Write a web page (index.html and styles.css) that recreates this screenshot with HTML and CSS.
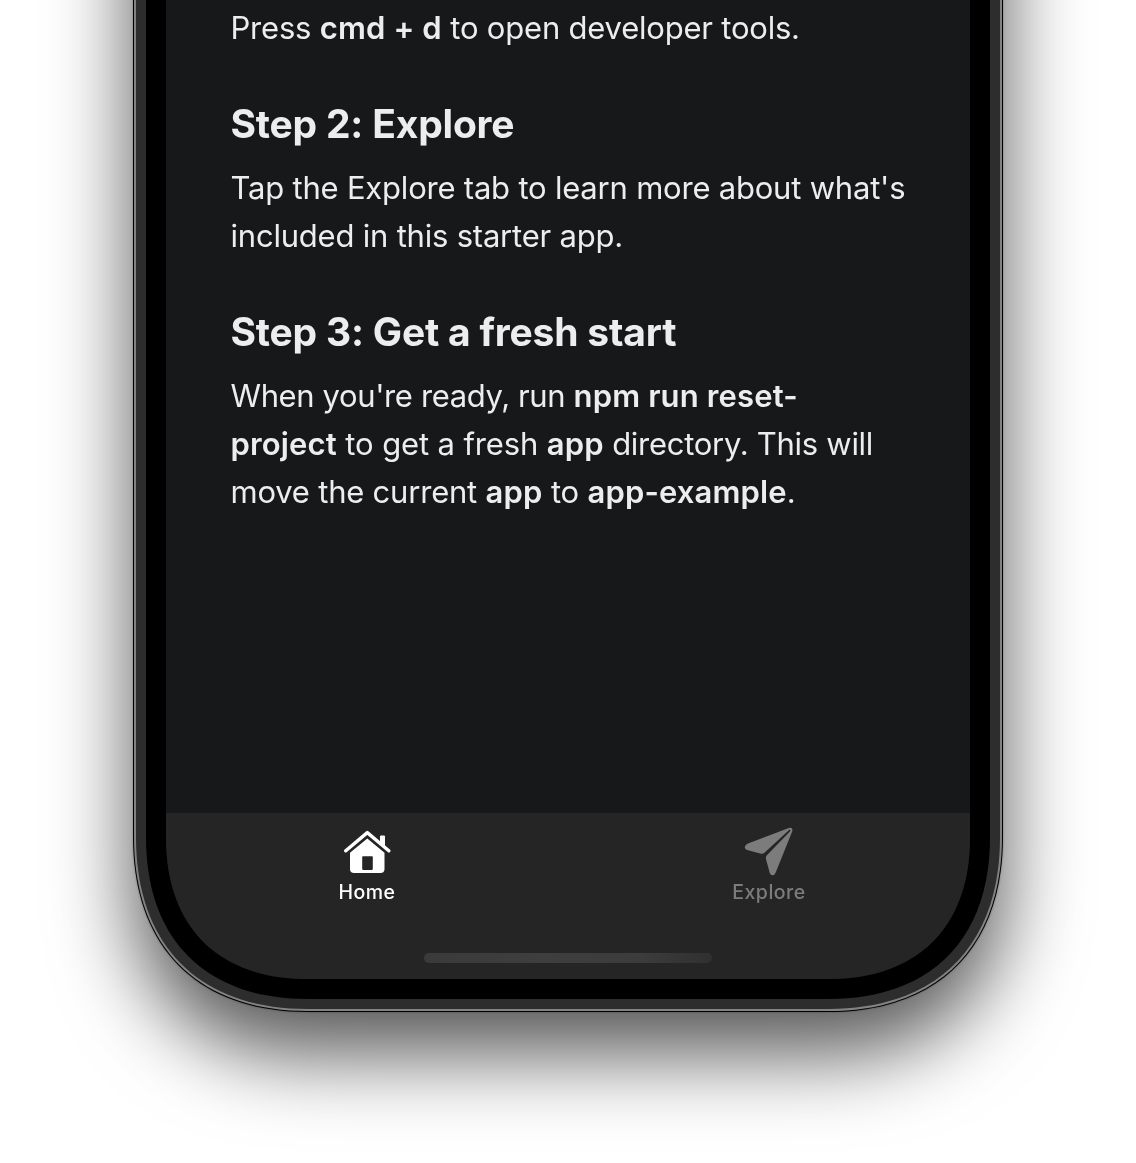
FILE: index.html
```html
<!DOCTYPE html>
<html lang="en">
<head>
<meta charset="utf-8">
<title>Starter app</title>
<link rel="stylesheet" href="styles.css">
</head>
<body>
<div class="phone">
  <div class="outline">
    <div class="highlight">
      <div class="rim">
        <div class="bezel">
          <div class="screen">
            <main class="content">
              <section class="step">
                <p class="text">Press <b>cmd + d</b> to open developer tools.</p>
              </section>
              <section class="step">
                <h2 class="title">Step 2: Explore</h2>
                <p class="text">Tap the Explore tab to learn more about what's<br>included in this starter app.</p>
              </section>
              <section class="step">
                <h2 class="title">Step 3: Get a fresh start</h2>
                <p class="text"><span class="tight">When you're ready, run </span><b>npm run reset-</b><br><b>project</b><span class="loose"> to get a fresh </span><b>app</b><span class="snug"> directory. This will</span><br>move the current <b>app</b> to <b>app-example</b>.</p>
              </section>
            </main>
            <nav class="tabs">
              <div class="tab-row">
                <a class="tab active">
                  <svg class="icon" viewBox="0 0 50 50" width="50" height="50">
                    <path d="M3.8 23.8 25.3 5.6 46.8 23.8" fill="none" stroke="currentColor" stroke-width="3.4" stroke-linecap="round" stroke-linejoin="round"/>
                    <path d="M38 16V9.4q0-1 1-1h3q1 0 1 1v10.8z" fill="currentColor"/>
                    <path fill-rule="evenodd" d="M25.3 11.4 42.5 25.8V42q0 4-4 4H12q-4 0-4-4V25.8zM21 29.3q-.8 0-.8.8v12q0 .8.8.8h9q.8 0 .8-.8v-12q0-.8-.8-.8z" fill="currentColor"/>
                  </svg>
                  <span class="label">Home</span>
                </a>
                <a class="tab">
                  <svg class="icon" viewBox="0 0 50 50" width="50" height="50">
                    <path d="M44.8.9Q49.3-.3 48.2 4.4L31.8 45.2Q30.6 48.3 28.6 48.3 26.3 48.2 25.5 45L22 32.3Q21.4 29.8 22.9 28.3L46.4 3.9Q46.8 2.4 45.4 2.7L20.7 25.5Q19 27.2 17 26.7L4 23.2Q.6 22.2.8 19.9 1 17.7 4 16.6z" fill="currentColor"/>
                  </svg>
                  <span class="label">Explore</span>
                </a>
              </div>
              <div class="home-indicator"></div>
            </nav>
          </div>
        </div>
      </div>
    </div>
  </div>
</div>
</body>
</html>
```

FILE: styles.css
```css
* { box-sizing: border-box; }
body {
  margin: 0;
  height: 1163px;
  overflow: hidden;
  background: #fff;
  font-family: Inter, "Liberation Sans", sans-serif;
  display: flex;
  flex-direction: column;
  align-items: center;
}
.phone {
  flex: none;
  width: 870px;
  height: 1412px;
  margin-top: -400px;
  filter: drop-shadow(0 0 1px rgba(0, 0, 0, .3)) drop-shadow(0 42px 41px rgba(0, 0, 0, .66));
}
/* Nested layers of the device frame, each with continuous-curvature corners */
.outline {
  height: 1412px;
  padding: 1px;
  background: #000;
  clip-path: path("M0 0H870V1237C870 1347.6 805.6 1412 695 1412H175C64.4 1412 0 1347.6 0 1237Z");
}
.highlight {
  height: 1410px;
  padding: 2px;
  background: #828282;
  clip-path: path("M0 0H868V1236.1C868 1346 804 1410 694.1 1410H173.9C64 1410 0 1346 0 1236.1Z");
}
.rim {
  height: 1406px;
  padding: 10px;
  background: #2d2d2d;
  clip-path: path("M0 0H864V1234.3C864 1342.9 800.9 1406 692.3 1406H171.7C63.1 1406 0 1342.9 0 1234.3Z");
}
.bezel {
  height: 1386px;
  padding: 20px;
  background: #000;
  clip-path: path("M0 0H844V1224.3C844 1326.6 784.6 1386 682.3 1386H161.7C59.4 1386 0 1326.6 0 1224.3Z");
}
.screen {
  height: 1346px;
  clip-path: path("M0 0H804V1204.4C804 1293.9 751.9 1346 662.4 1346H141.6C52.1 1346 0 1293.9 0 1204.4Z");
  background: #17181a;
  display: flex;
  flex-direction: column;
  justify-content: space-between;
  color: #ecedee;
}
.content {
  padding: 371px 0 0 64.5px;
  display: flex;
  flex-direction: column;
  gap: 48px;
  white-space: nowrap;
}
.step { display: flex; flex-direction: column; gap: 16px; }
.title { margin: 0; font-size: 39px; line-height: 48px; font-weight: 700; letter-spacing: -.2px; }
.text { margin: 0; font-size: 31px; line-height: 48px; font-weight: 400; letter-spacing: -.21px; }
.tight { letter-spacing: -.38px; }
.loose { letter-spacing: -.13px; }
.snug { letter-spacing: -.28px; }
.text b { font-weight: 600; letter-spacing: .14px; }
.tabs {
  height: 166px;
  background: #252525;
  display: flex;
  flex-direction: column;
  justify-content: space-between;
  align-items: center;
  padding: 14px 0 16px;
}
.tab-row { width: 100%; display: flex; }
.tab {
  flex: 1;
  display: flex;
  flex-direction: column;
  align-items: center;
  gap: 3px;
  color: #7c7c7c;
}
.active { color: #fff; }
.icon { display: block; }
.label { font-size: 19.5px; line-height: 24px; font-weight: 500; letter-spacing: .5px; }
.home-indicator {
  width: 288px;
  height: 10px;
  border-radius: 5px;
  background: linear-gradient(90deg, #3a3a3a, #3e3e3e 40%, #3c3c3c 75%, #303030);
}
```
